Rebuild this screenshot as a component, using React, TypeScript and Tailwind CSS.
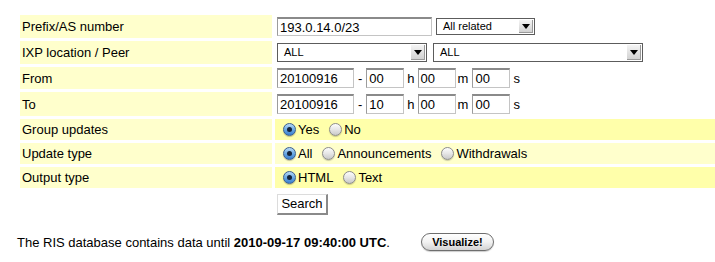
import React from "react";

const font = { fontFamily: '"Liberation Sans", Arial, Helvetica, sans-serif' };

function TextBox({ value, w, h = 20 }: { value: string; w: number; h?: number }) {
  return (
    <div
      className="flex items-center bg-white border border-[#c4c4c4] border-t-2 border-t-[#8a8a8a] border-l-[#9c9c9c] pl-[2px] text-[13px] text-black leading-none overflow-hidden"
      style={{ width: w, height: h }}
    >
      {value}
    </div>
  );
}

function Select({ value, w, h = 18 }: { value: string; w: number; h?: number }) {
  return (
    <div
      className="flex items-center justify-between bg-white border border-[#5c5c5c] text-[11px] text-black leading-none"
      style={{ width: w, height: h }}
    >
      <span className="pl-[6px]">{value}</span>
      <div className="flex items-center justify-center self-stretch my-[1px] mr-[1px] w-[14px] bg-gradient-to-b from-[#f4f4f4] to-[#d2d2d2] border-r border-b border-[#9a9a9a]">
        <div className="w-0 h-0 border-l-[4px] border-r-[4px] border-t-[5px] border-l-transparent border-r-transparent border-t-black" />
      </div>
    </div>
  );
}

function Radio({ checked }: { checked?: boolean }) {
  if (checked) {
    return (
      <div className="flex items-center justify-center w-[13px] h-[13px] rounded-full border border-[#3a5f8f] bg-gradient-to-b from-[#b9dbf7] via-[#6aa9e3] to-[#3a7fd0] shadow-[0_1px_1px_rgba(0,0,0,0.25)]">
        <div className="w-[5px] h-[5px] rounded-full bg-[#14233a]" />
      </div>
    );
  }
  return (
    <div className="w-[13px] h-[13px] rounded-full border border-[#8c8c8c] bg-gradient-to-b from-[#fdfdfd] via-[#e6e6e6] to-[#c9c9c9] shadow-[0_1px_1px_rgba(0,0,0,0.2)]" />
  );
}

function RadioOpt({ label, checked, ml }: { label: string; checked?: boolean; ml: number }) {
  return (
    <div className="flex items-center" style={{ marginLeft: ml }}>
      <Radio checked={checked} />
      <span className="ml-[2px] text-[13px] leading-none">{label}</span>
    </div>
  );
}

function Label({ children }: { children: React.ReactNode }) {
  return (
    <div className="bg-[#ffffcc] flex items-center pl-[2px] text-[13px] text-black leading-none">
      {children}
    </div>
  );
}

function TimeRow({ date, hour }: { date: string; hour: string }) {
  return (
    <div className="flex items-center pl-[2px] text-[13px] leading-none">
      <TextBox value={date} w={77} />
      <span className="mx-[4px]">-</span>
      <TextBox value={hour} w={38} />
      <span className="ml-[3px] mr-[3px]">h</span>
      <TextBox value="00" w={38} />
      <span className="ml-[2px] mr-[4px]">m</span>
      <TextBox value="00" w={38} />
      <span className="ml-[3px]">s</span>
    </div>
  );
}

export default function App() {
  return (
    <div className="w-[715px] h-[262px] bg-white text-black overflow-hidden" style={font}>
      <div className="pt-[15px] pl-[20px] grid grid-cols-[252px_1fr] gap-x-[3px] gap-y-[3px] grid-rows-[23px_23px_22px_24px_21px_21px_21px]">
        <Label>Prefix/AS number</Label>
        <div className="flex items-center pl-[2px]">
          <TextBox value="193.0.14.0/23" w={155} h={19} />
          <div className="ml-[4px]">
            <Select value="All related" w={99} h={17} />
          </div>
        </div>

        <Label>IXP location / Peer</Label>
        <div className="flex items-center pl-[2px]">
          <Select value="ALL" w={150} h={19} />
          <div className="ml-[6px]">
            <Select value="ALL" w={210} h={19} />
          </div>
        </div>

        <Label>From</Label>
        <TimeRow date="20100916" hour="00" />

        <Label>To</Label>
        <TimeRow date="20100916" hour="10" />

        <Label>Group updates</Label>
        <div className="bg-[#ffffaa] flex items-center pl-[8px]">
          <RadioOpt label="Yes" checked ml={0} />
          <RadioOpt label="No" ml={10} />
        </div>

        <Label>Update type</Label>
        <div className="bg-[#ffffcc] flex items-center pl-[8px]">
          <RadioOpt label="All" checked ml={0} />
          <RadioOpt label="Announcements" ml={10} />
          <RadioOpt label="Withdrawals" ml={10} />
        </div>

        <Label>Output type</Label>
        <div className="bg-[#ffffaa] flex items-center pl-[8px]">
          <RadioOpt label="HTML" checked ml={0} />
          <RadioOpt label="Text" ml={10} />
        </div>

        <div />
        <div className="pl-[2px]">
          <div className="inline-flex items-center justify-center w-[51px] h-[21px] bg-white border border-[#dcdcdc] border-r-2 border-b-2 border-r-[#8a8a8a] border-b-[#8a8a8a] text-[13px] leading-none">
            Search
          </div>
        </div>
      </div>

      <div className="flex items-center mt-[18px] pl-[17px] text-[13px] leading-none">
        <span>
          The RIS database contains data until <b>2010-09-17 09:40:00 UTC</b>.
        </span>
        <div className="ml-[31px] flex items-center justify-center w-[73px] h-[18px] rounded-full border border-[#6e6e6e] bg-gradient-to-b from-white via-[#f2f2f2] to-[#d4d4d4] text-[11px] font-bold leading-none shadow-[0_1px_1px_rgba(0,0,0,0.2)]">
          Visualize!
        </div>
      </div>
    </div>
  );
}
